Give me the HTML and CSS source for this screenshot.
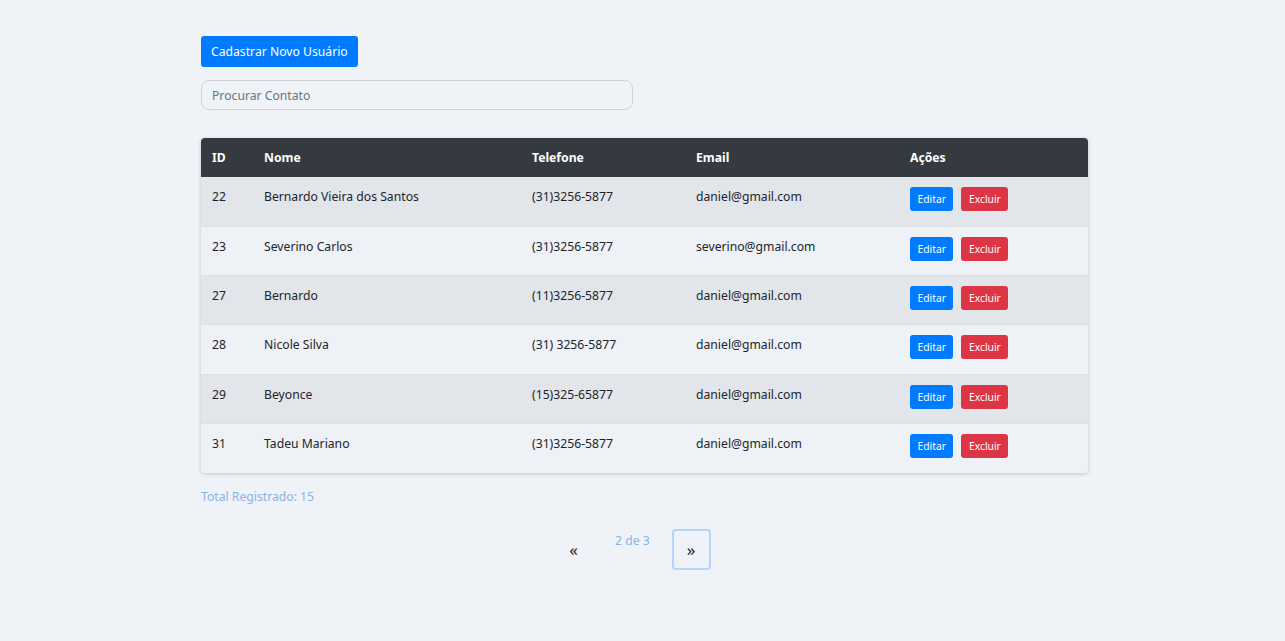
FILE: index.html
```html
<!DOCTYPE html>
<html lang="pt-BR">
<head>
<meta charset="utf-8">
<title>Usuários</title>
<link rel="stylesheet" href="styles.css">
</head>
<body>
<div class="container">
  <button class="btn btn-primary btn-new">Cadastrar Novo Usuário</button>
  <input class="search" type="text" placeholder="Procurar Contato">
  <div class="table-wrap">
    <table class="users">
      <thead>
        <tr><th class="c-id">ID</th><th class="c-nome">Nome</th><th class="c-tel">Telefone</th><th class="c-email">Email</th><th>Ações</th></tr>
      </thead>
      <tbody>
        <tr><td>22</td><td>Bernardo Vieira dos Santos</td><td>(31)3256-5877</td><td>daniel@gmail.com</td><td><button class="btn-sm edit">Editar</button><button class="btn-sm del">Excluir</button></td></tr>
        <tr><td>23</td><td>Severino Carlos</td><td>(31)3256-5877</td><td>severino@gmail.com</td><td><button class="btn-sm edit">Editar</button><button class="btn-sm del">Excluir</button></td></tr>
        <tr><td>27</td><td>Bernardo</td><td>(11)3256-5877</td><td>daniel@gmail.com</td><td><button class="btn-sm edit">Editar</button><button class="btn-sm del">Excluir</button></td></tr>
        <tr><td>28</td><td>Nicole Silva</td><td>(31) 3256-5877</td><td>daniel@gmail.com</td><td><button class="btn-sm edit">Editar</button><button class="btn-sm del">Excluir</button></td></tr>
        <tr><td>29</td><td>Beyonce</td><td>(15)325-65877</td><td>daniel@gmail.com</td><td><button class="btn-sm edit">Editar</button><button class="btn-sm del">Excluir</button></td></tr>
        <tr><td>31</td><td>Tadeu Mariano</td><td>(31)3256-5877</td><td>daniel@gmail.com</td><td><button class="btn-sm edit">Editar</button><button class="btn-sm del">Excluir</button></td></tr>
      </tbody>
    </table>
  </div>
  <p class="total">Total Registrado: 15</p>
  <div class="pager">
    <button class="page-btn">«</button>
    <span class="page-info">2 de 3</span>
    <button class="page-btn focused">»</button>
  </div>
</div>
</body>
</html>
```
FILE: styles.css
```css
html, body {
  margin: 0;
  padding: 0;
  background: #eff2f7;
  font-family: "Noto Sans", "Open Sans", sans-serif;
  color: #212529;
}
.container {
  width: 888px;
  margin-left: calc(50% - 441.5px);
  padding-top: 36px;
  display: flex;
  flex-direction: column;
  align-items: flex-start;
}
.btn {
  font-family: inherit;
  border: none;
  cursor: pointer;
}
.btn-primary {
  background: #007bff;
  color: #fff;
  font-size: 12.2px;
  height: 31px;
  padding: 0 10px;
  border-radius: 3px;
}
.search {
  margin-top: 13px;
  width: 432px;
  height: 30px;
  box-sizing: border-box;
  border: 1px solid #ced4da;
  border-radius: 8px;
  background: transparent;
  padding: 0 10px;
  font-family: inherit;
  font-size: 12.2px;
  color: #495057;
}
.search::placeholder { color: #6c757d; }
.table-wrap {
  margin-top: 28px;
  width: 887px;
  border-radius: 4px;
  overflow: hidden;
  box-shadow: 0 1px 4px rgba(0,0,0,0.18);
}
.users {
  width: 100%;
  border-collapse: collapse;
  font-size: 12.2px;
}
.users th {
  background: #343a40;
  color: #fff;
  font-weight: 700;
  text-align: left;
  height: 39px;
  padding: 0 10px 0 11px;
  font-size: 12.2px;
}
.users td {
  height: 49.3px;
  padding: 10px 10px 0 11px;
  box-sizing: border-box;
  color: #212529;
  vertical-align: top;
  line-height: 20px;
  border-top: 1px solid #dde1e6;
}
.users tbody tr:first-child td { border-top: none; }
.users tbody tr:nth-child(odd) td { background: #e2e5ea; }
.users tbody tr:nth-child(even) td { background: #eef1f6; }
.c-id { width: 31px; }
.c-nome { width: 247px; }
.c-tel { width: 143px; }
.c-email { width: 193px; }
.btn-sm {
  font-family: inherit;
  border: none;
  color: #fff;
  font-size: 10.3px;
  height: 24px;
  padding: 0 7.5px;
  border-radius: 3px;
  margin-right: 8px;
  vertical-align: top;
}
.edit { background: #007bff; }
.del { background: #dc3545; }
.total {
  margin: 15px 0 0;
  font-size: 12.2px;
  color: #8ab4e8;
}
.pager {
  display: flex;
  align-items: flex-start;
  gap: 22px;
  margin-top: 24px;
  margin-left: 353px;
}
.page-btn {
  width: 39px;
  height: 41px;
  background: transparent;
  border: 2px solid transparent;
  border-radius: 4px;
  font-size: 17px;
  color: #212529;
  font-family: inherit;
  padding: 0;
}
.page-btn.focused { border-color: #b3d4fb; }
.page-info {
  font-size: 12.2px;
  color: #8ab4e8;
  text-align: center;
  margin-top: 3px;
}
```
